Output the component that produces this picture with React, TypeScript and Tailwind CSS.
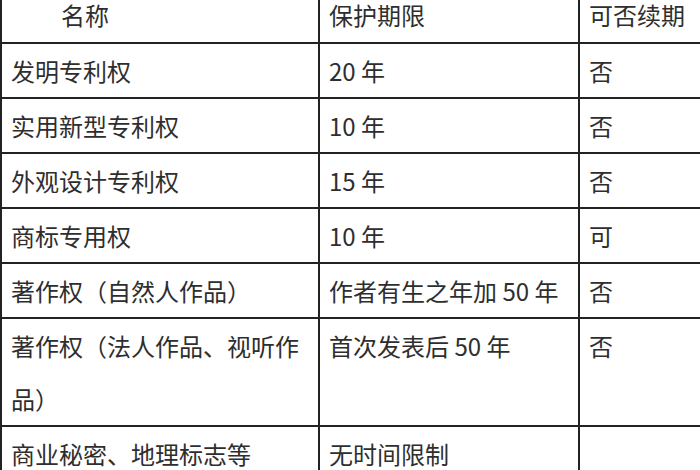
const rows: { name: string; term: string; renew: string }[] = [
  { name: "发明专利权", term: "20 年", renew: "否" },
  { name: "实用新型专利权", term: "10 年", renew: "否" },
  { name: "外观设计专利权", term: "15 年", renew: "否" },
  { name: "商标专用权", term: "10 年", renew: "可" },
  { name: "著作权（自然人作品）", term: "作者有生之年加 50 年", renew: "否" },
  { name: "著作权（法人作品、视听作品）", term: "首次发表后 50 年", renew: "否" },
  { name: "商业秘密、地理标志等", term: "无时间限制", renew: "" },
];

const base = "border-r-2 border-b-2 border-[#222] pl-[9px] pr-[10px]";
const cell = `${base} leading-[53px]`;
const head = `${base} pb-[12px] leading-[30px]`;

export default function App() {
  return (
    <div
      className="h-[470px] w-[700px] overflow-hidden bg-white text-[24px] text-[#2e2e2e]"
      style={{ fontFamily: '"Noto Sans CJK SC", "Noto Sans", sans-serif' }}
    >
      <div className="grid w-[780px] grid-cols-[318px_260px_202px] border-l-2 border-[#222]">
        <div className={`${head} pl-[59px]`}>名称</div>
        <div className={head}>保护期限</div>
        <div className={head}>可否续期</div>
        {rows.map((r) => (
          <div key={r.name} className="contents">
            <div className={cell}>{r.name}</div>
            <div className={cell}>{r.term}</div>
            <div className={cell}>{r.renew}</div>
          </div>
        ))}
      </div>
    </div>
  );
}
